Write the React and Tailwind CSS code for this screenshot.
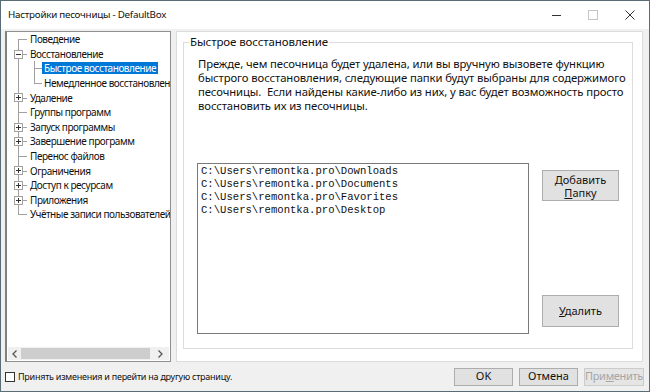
import React from "react";

const rows = [
  { label: "Поведение", pos: "first" },
  { label: "Восстановление", exp: "-" },
  { label: "Быстрое восстановление", child: true, selected: true },
  { label: "Немедленное восстановление", child: true, lastChild: true },
  { label: "Удаление", exp: "+" },
  { label: "Группы программ" },
  { label: "Запуск программы", exp: "+" },
  { label: "Завершение программ", exp: "+" },
  { label: "Перенос файлов" },
  { label: "Ограничения", exp: "+" },
  { label: "Доступ к ресурсам", exp: "+" },
  { label: "Приложения", exp: "+" },
  { label: "Учётные записи пользователей", pos: "last" },
];

function TreeRow({ r }) {
  const vClass =
    r.pos === "first"
      ? "top-1/2 bottom-0"
      : r.pos === "last"
      ? "top-0 h-1/2"
      : "top-0 bottom-0";
  return (
    <div className="h-[14.6px] flex items-center whitespace-nowrap">
      <div className={`relative h-full shrink-0 ${r.child ? "w-[35px]" : "w-[21px]"}`}>
        <div className={`absolute left-[11px] w-px bg-[#a0a0a0] ${vClass}`} />
        {!r.child && <div className="absolute left-[11px] top-1/2 w-[9px] h-px bg-[#a0a0a0]" />}
        {r.child && (
          <>
            <div
              className={`absolute left-[27px] w-px bg-[#a0a0a0] ${
                r.lastChild ? "top-0 h-1/2" : "top-0 bottom-0"
              }`}
            />
            <div className="absolute left-[27px] top-1/2 w-[8px] h-px bg-[#a0a0a0]" />
          </>
        )}
        {r.exp && (
          <div className="absolute left-[7px] top-[3px] w-[9px] h-[9px] border border-[#a0a0a0] bg-white">
            <div className="absolute left-[1px] top-[3px] w-[5px] h-px bg-[#333]" />
            {r.exp === "+" && <div className="absolute left-[3px] top-[1px] w-px h-[5px] bg-[#333]" />}
          </div>
        )}
      </div>
      <span
        className={`px-[2px] leading-[12px] h-[12px] text-[10px] tracking-[-0.45px] ${
          r.selected ? "bg-[#0078d7] text-white" : "text-[#111]"
        }`}
      >
        {r.label}
      </span>
    </div>
  );
}

function Btn({ children, className = "" }) {
  return (
    <div
      className={`flex items-center justify-center whitespace-nowrap bg-[#e1e1e1] border border-[#adadad] text-[11px] text-[#111] ${className}`}
    >
      {children}
    </div>
  );
}

export default function App() {
  return (
    <div
      className="w-[650px] h-[392px] border border-[#5c6c77] bg-[#f0f0f0] flex flex-col overflow-hidden"
      style={{ fontFamily: '"Noto Sans", "Liberation Sans", sans-serif' }}
    >
      {/* Title bar */}
      <div className="h-[28px] bg-white flex items-center shrink-0">
        <div className="pl-[7px] text-[9.8px] text-[#111] tracking-[-0.25px]">
          Настройки песочницы - DefaultBox
        </div>
        <div className="ml-auto flex items-center h-full">
          <div className="w-[9px] h-px bg-[#333] mr-[27px]" />
          <div className="w-[10px] h-[10px] border border-[#c4c4c4] mr-[27px]" />
          <svg width="10" height="10" viewBox="0 0 10 10" className="mr-[14px]">
            <path d="M0.5 0.5 L9.5 9.5 M9.5 0.5 L0.5 9.5" stroke="#333" strokeWidth="1" />
          </svg>
        </div>
      </div>

      {/* Main */}
      <div className="flex pt-[2px] pl-[4px] h-[333px] shrink-0">
        {/* Tree */}
        <div className="w-[166px] h-[331px] border border-[#8e8f8f] border-l-2 border-l-[#808080] bg-white flex flex-col">
          <div className="flex-1 overflow-hidden">
            {rows.map((r) => (
              <TreeRow key={r.label} r={r} />
            ))}
          </div>
          <div className="h-[13px] flex items-center bg-[#f0f0f0] mx-[1px] mb-[1px]">
            <div className="w-[13px] flex justify-center text-[#555]">
              <svg width="6" height="8" viewBox="0 0 6 8">
                <path d="M4.5 0.5 L1 4 L4.5 7.5" stroke="#555" strokeWidth="1.3" fill="none" />
              </svg>
            </div>
            <div className="w-[129px] h-[11px] bg-[#cdcdcd]" />
            <div className="flex-1 flex justify-center">
              <svg width="6" height="8" viewBox="0 0 6 8">
                <path d="M1.5 0.5 L5 4 L1.5 7.5" stroke="#555" strokeWidth="1.3" fill="none" />
              </svg>
            </div>
          </div>
        </div>

        {/* Right panel */}
        <div className="ml-[5px] w-[467px] h-[331px] bg-white border border-[#dcdcdc] pl-[6px] pr-[9px] pt-[10px] pb-[12px]">
          <div className="relative h-full border border-[#dcdcdc] pl-[14px] pt-[14px] flex flex-col">
            <div className="absolute -top-[9px] left-[5px] bg-white px-[1px] text-[11.5px] leading-[16px] text-[#111] tracking-[-0.1px]">
              Быстрое восстановление
            </div>
            <div className="text-[11.3px] leading-[14px] text-[#111] tracking-[-0.1px] whitespace-nowrap">
              Прежде, чем песочница будет удалена, или вы вручную вызовете функцию
              <br />
              быстрого восстановления, следующие папки будут выбраны для содержимого
              <br />
              песочницы.&nbsp; Если найдены какие-либо из них, у вас будет возможность просто
              <br />
              восстановить их из песочницы.
            </div>
            <div className="flex mt-[50px] -ml-[1px]">
              <div
                className="w-[332px] h-[171px] border border-[#7a7a7a] bg-white pl-[3px] pt-[1px] text-[10.6px] leading-[13px] text-[#111]"
                style={{ fontFamily: '"Liberation Mono", monospace' }}
              >
                <div>C:\Users\remontka.pro\Downloads</div>
                <div>C:\Users\remontka.pro\Documents</div>
                <div>C:\Users\remontka.pro\Favorites</div>
                <div>C:\Users\remontka.pro\Desktop</div>
              </div>
              <div className="ml-[13px] flex flex-col justify-between py-[7px]">
                <Btn className="w-[77px] h-[31px] flex-col leading-[13px]">
                  <span>Добавить</span>
                  <span>
                    <span className="underline">П</span>апку
                  </span>
                </Btn>
                <Btn className="w-[77px] h-[32px]">
                  <span>
                    <span className="underline">У</span>далить
                  </span>
                </Btn>
              </div>
            </div>
          </div>
        </div>
      </div>

      {/* Bottom bar */}
      <div className="flex-1 flex items-center pl-[4px] pr-[5px]">
        <div className="w-[10px] h-[10px] border border-[#333] bg-white" />
        <div className="ml-[3px] text-[9px] text-[#111] tracking-[-0.25px]">
          Принять изменения и перейти на другую страницу.
        </div>
        <div className="ml-auto flex gap-[6px]">
          <Btn className="w-[59px] h-[18px] border-[#0078d7]">OK</Btn>
          <Btn className="w-[59px] h-[18px]">Отмена</Btn>
          <Btn className="w-[60px] h-[18px] border-[#cccccc] bg-[#e5e5e5] !text-[#a6a6a6] text-[10px] tracking-[-0.3px]">
            <span>
              При<span className="underline">м</span>енить
            </span>
          </Btn>
        </div>
      </div>
    </div>
  );
}
